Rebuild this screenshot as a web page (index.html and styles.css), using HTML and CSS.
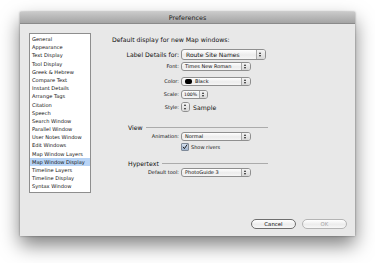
FILE: index.html
```html
<!DOCTYPE html>
<html lang="en">
<head>
  <meta charset="UTF-8">
  <title>Preferences</title>
  <link rel="stylesheet" href="styles.css">
</head>
<body>
  <div class="window">
    <div class="titlebar">Preferences</div>

    <div class="content">
      <ul class="pref-list">
        <li>General</li>
        <li>Appearance</li>
        <li>Text Display</li>
        <li>Tool Display</li>
        <li>Greek &amp; Hebrew</li>
        <li>Compare Text</li>
        <li>Instant Details</li>
        <li>Arrange Tags</li>
        <li>Citation</li>
        <li>Speech</li>
        <li>Search Window</li>
        <li>Parallel Window</li>
        <li>User Notes Window</li>
        <li>Edit Windows</li>
        <li>Map Window Layers</li>
        <li class="selected">Map Window Display</li>
        <li>Timeline Layers</li>
        <li>Timeline Display</li>
        <li>Syntax Window</li>
      </ul>

      <div class="panel">
        <div class="heading">Default display for new Map windows:</div>

        <div class="row row-label-details">
          <span class="label big">Label Details for:</span>
          <span class="popup popup-wide big">Route Site Names<span class="arrows"></span></span>
        </div>

        <div class="row row-font">
          <span class="label">Font:</span>
          <span class="popup">Times New Roman<span class="arrows"></span></span>
        </div>

        <div class="row row-color">
          <span class="label">Color:</span>
          <span class="popup"><span class="swatch"></span>Black<span class="arrows"></span></span>
        </div>

        <div class="row row-scale">
          <span class="label">Scale:</span>
          <span class="popup popup-small">100%<span class="arrows"></span></span>
        </div>

        <div class="row row-style">
          <span class="label">Style:</span>
          <span class="popup popup-icon"><span class="arrows"></span></span>
          <span class="sample">Sample</span>
        </div>

        <div class="group group-view">
          <span class="group-title">View</span>
          <span class="group-line"></span>
        </div>

        <div class="row row-animation">
          <span class="label">Animation:</span>
          <span class="popup">Normal<span class="arrows"></span></span>
        </div>

        <div class="row row-rivers">
          <span class="label"></span>
          <span class="checkbox">
            <svg width="8" height="8" viewBox="0 0 8 8">
              <path d="M1.6 4.2 L3.2 6.2 L6.6 1.2" fill="none" stroke="#1c1c1c" stroke-width="1.3" stroke-linecap="round" stroke-linejoin="round"/>
            </svg>
          </span>
          <span class="check-text">Show rivers</span>
        </div>

        <div class="group group-hypertext">
          <span class="group-title">Hypertext</span>
          <span class="group-line"></span>
        </div>

        <div class="row row-tool">
          <span class="label">Default tool:</span>
          <span class="popup">PhotoGuide 3<span class="arrows"></span></span>
        </div>
      </div>
    </div>

    <div class="footer">
      <button class="push-button">Cancel</button>
      <button class="push-button disabled">OK</button>
    </div>
  </div>
</body>
</html>
```

FILE: styles.css
```css
body {
  margin: 0;
  padding: 0;
  background-color: #fff;
  font-family: 'DejaVu Sans', Verdana, sans-serif;
  color: #111;
  height: 263px;
  overflow: hidden;
}

.window {
  margin: 12px 0 0 20px;
  width: 335px;
  height: 224px;
  display: flex;
  flex-direction: column;
  background-color: #e8e8e8;
  box-shadow: 0 9px 18px rgba(0, 0, 0, 0.5), 0 0 2px rgba(0, 0, 0, 0.4);
}

.titlebar {
  height: 12px;
  line-height: 12px;
  text-align: center;
  font-size: 6.4px;
  color: #222;
  background: linear-gradient(#c9c9c9, #a4a4a4);
  border-bottom: 1px solid #8a8a8a;
  box-sizing: border-box;
}

.content {
  flex: 1;
  display: flex;
  padding: 9px 0 0 9px;
}

.pref-list {
  list-style: none;
  margin: 0;
  padding: 1px 0;
  width: 62px;
  height: 160px;
  box-sizing: border-box;
  overflow: hidden;
  background-color: #fff;
  border: 1px solid #8e8e8e;
  font-size: 5.1px;
}

.pref-list li {
  height: 8.2px;
  line-height: 8px;
  padding-left: 2px;
  white-space: nowrap;
}

.pref-list .selected {
  background-color: #b8d4f6;
}

.panel {
  margin-left: 21px;
  margin-top: 1px;
  width: 156px;
  display: flex;
  flex-direction: column;
}

.heading {
  height: 11px;
  line-height: 11px;
  font-size: 6.2px;
}

.row {
  display: flex;
  align-items: center;
  height: 10px;
}

.label {
  width: 67px;
  padding-right: 2px;
  text-align: right;
  font-size: 5px;
  white-space: nowrap;
}

.big {
  font-size: 6.2px;
}

.row-label-details { margin-top: 3px; height: 12px; }
.row-font { margin-top: 1px; }
.row-color { margin-top: 5px; }
.row-scale { margin-top: 3px; }
.row-style { margin-top: 3px; }
.row-animation { margin-top: 0; }
.row-rivers { margin-top: 1px; }
.row-tool { margin-top: 0; }

.popup {
  position: relative;
  display: flex;
  align-items: center;
  width: 70px;
  height: 9px;
  box-sizing: border-box;
  padding-left: 3px;
  font-size: 5px;
  white-space: nowrap;
  background: linear-gradient(#ffffff, #ececec 55%, #f6f6f6);
  border: 1px solid #8f8f8f;
  border-radius: 3px;
}

.popup-wide {
  width: 85px;
  height: 11px;
  padding-left: 4px;
  font-size: 6px;
}

.popup-small {
  width: 27px;
  padding-left: 2px;
  font-size: 4.6px;
}

.popup-small .arrows {
  width: 7px;
}

.popup-icon {
  width: 9px;
  height: 10px;
  padding-left: 0;
}

.arrows {
  position: absolute;
  top: 0;
  right: 0;
  bottom: 0;
  width: 8px;
  border-left: 1px solid #a8a8a8;
  background: linear-gradient(#f4f4f4, #d8d8d8);
  border-radius: 0 2px 2px 0;
}

.popup-icon .arrows {
  width: 7px;
  border-left: none;
  border-radius: 2px;
}

.arrows::before,
.arrows::after {
  content: "";
  position: absolute;
  left: 2px;
  border-left: 1.5px solid transparent;
  border-right: 1.5px solid transparent;
}

.arrows::before {
  top: 1px;
  border-bottom: 2px solid #222;
}

.arrows::after {
  bottom: 1px;
  border-top: 2px solid #222;
}

.popup-wide .arrows::before { top: 2px; }
.popup-wide .arrows::after { bottom: 2px; }

.swatch {
  display: inline-block;
  width: 7px;
  height: 5px;
  margin-right: 3px;
  background-color: #000;
  border-radius: 2px;
}

.sample {
  margin-left: 3px;
  font-size: 6.2px;
}

.group {
  display: flex;
  align-items: center;
  height: 8px;
  padding-left: 16px;
  font-size: 6.2px;
}

.group-view { margin-top: 11px; }
.group-hypertext { margin-top: 7px; }

.group-title {
  margin-right: 3px;
  white-space: nowrap;
}

.group-line {
  flex: 1;
  height: 1px;
  margin-top: 1px;
  background-color: #ababab;
}

.checkbox {
  display: flex;
  align-items: center;
  justify-content: center;
  width: 8px;
  height: 8px;
  box-sizing: border-box;
  border: 1px solid #7f8a99;
  border-radius: 1px;
  background: linear-gradient(#d4e0ef, #9fb4cf);
}

.check-text {
  margin-left: 2px;
  font-size: 5px;
}

.footer {
  display: flex;
  justify-content: flex-end;
  gap: 6px;
  padding: 0 8px 7px 0;
}

.push-button {
  width: 45px;
  height: 10px;
  padding: 0;
  font-family: 'DejaVu Sans', Verdana, sans-serif;
  font-size: 5.4px;
  line-height: 8px;
  color: #111;
  background: linear-gradient(#ffffff, #ececec 55%, #f7f7f7);
  border: 1px solid #6e6e6e;
  border-radius: 5px;
}

.push-button.disabled {
  color: #a8a8a8;
  border-color: #b4b4b4;
}
```
